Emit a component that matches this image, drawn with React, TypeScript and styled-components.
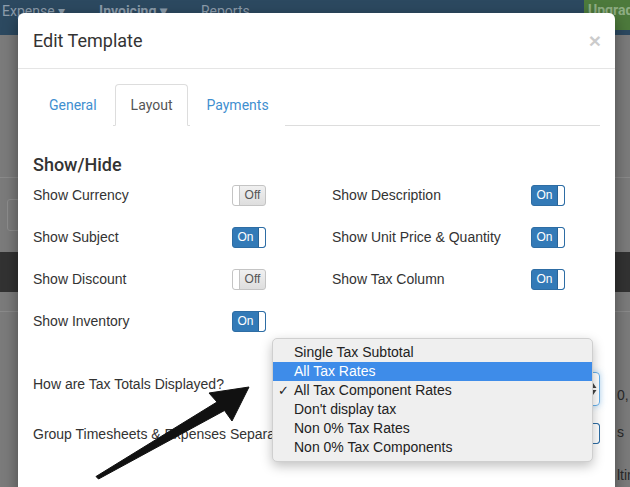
import * as React from "react"
import styled, { createGlobalStyle } from "styled-components"

const GlobalStyle = createGlobalStyle`
    html, body {
        margin: 0;
        padding: 0;
        background: #7b7b7b;
        overflow: hidden;
    }
    * {
        box-sizing: border-box;
    }
`

const Page = styled.div`
    position: relative;
    width: 630px;
    height: 487px;
    overflow: hidden;
    font-family: "Liberation Sans", Arial, sans-serif;
`

// Dimmed application behind the modal
const NavBar = styled.div`
    display: flex;
    height: 35px;
    background: #2c4960;
    font-family: Roboto, sans-serif;
    font-size: 14px;
    color: #8c9cab;
`

const NavItem = styled.div<{ $bold?: boolean }>`
    padding: 2px 32px 0 2px;
    line-height: 18px;
    font-weight: ${p => (p.$bold ? 700 : 400)};
`

const Upgrade = styled.div`
    margin-left: auto;
    width: 46px;
    height: 30px;
    padding: 2px 0 0 4px;
    background: #4d7a3c;
    color: #8fae84;
    font-weight: 700;
    overflow: hidden;
    white-space: nowrap;
`

const BgBody = styled.div`
    display: flex;
    flex-direction: column;
`

const BgRow = styled.div<{ $h: number; $bg?: string; $line?: boolean; $bottom?: boolean }>`
    display: flex;
    align-items: ${p => (p.$bottom ? "flex-end" : "center")};
    height: ${p => p.$h}px;
    background: ${p => p.$bg || "#7b7b7b"};
    border-bottom: ${p => (p.$line ? "1px solid #8a8a8a" : "none")};
    padding-left: 617px;
    font-size: 14px;
    color: #2a2a2a;
    white-space: nowrap;
    overflow: hidden;
`

const BgInput = styled.div`
    position: relative;
    left: -610px;
    width: 60px;
    height: 32px;
    border: 1px solid #8d8d8d;
    border-radius: 3px;
`

// Modal
const Modal = styled.div`
    position: absolute;
    left: 18px;
    top: 13px;
    width: 597px;
    height: 500px;
    background: #fff;
    border-radius: 6px;
    box-shadow: 0 5px 15px rgba(0, 0, 0, 0.4);
    overflow: hidden;
`

const ModalHeader = styled.div`
    display: flex;
    align-items: center;
    padding: 15px;
    border-bottom: 1px solid #e5e5e5;
`

const Title = styled.h4`
    margin: 0;
    flex: 1;
    font-family: Roboto, sans-serif;
    font-size: 18px;
    font-weight: 400;
    line-height: 25px;
    color: #333;
`

const Close = styled.span`
    font-family: "Liberation Sans", sans-serif;
    font-size: 21px;
    font-weight: 700;
    line-height: 1;
    color: #000;
    opacity: 0.2;
    margin-right: -1px;
`

const ModalBody = styled.div`
    padding: 15px;
`

const Tabs = styled.ul`
    display: flex;
    margin: 0;
    padding: 0;
    list-style: none;
    border-bottom: 1px solid #ddd;
    font-family: Roboto, sans-serif;
    font-size: 14px;
`

const Tab = styled.li<{ $active?: boolean }>`
    margin: 0 2px -1px 0;
    padding: 10px 15px;
    line-height: 20px;
    border: 1px solid ${p => (p.$active ? "#ddd" : "transparent")};
    border-bottom-color: ${p => (p.$active ? "#fff" : "transparent")};
    border-radius: 4px 4px 0 0;
    background: #fff;
    color: ${p => (p.$active ? "#555" : "#3f8fd0")};
`

const Heading = styled.h3`
    margin: 30px 0 0;
    font-family: Roboto, sans-serif;
    font-size: 18px;
    font-weight: 500;
    line-height: 18px;
    color: #333;
`

const Grid = styled.div`
    display: grid;
    grid-template-columns: 299px 1fr;
    grid-auto-rows: 42px;
`

const Cell = styled.div`
    display: flex;
    align-items: center;
`

const Label = styled.span<{ $w?: number }>`
    width: ${p => (p.$w ? `${p.$w}px` : "auto")};
    font-size: 14px;
    color: #333;
`

const ToggleBox = styled.div<{ $on: boolean }>`
    display: flex;
    flex-direction: ${p => (p.$on ? "row" : "row-reverse")};
    width: 34px;
    height: 21px;
    border: 1px solid ${p => (p.$on ? "#2e6da4" : "#c4c4c4")};
    border-radius: 3px;
    background: ${p => (p.$on ? "#337ab7" : "linear-gradient(#f0f0f0, #dedede)")};
    overflow: hidden;
`

const ToggleText = styled.span<{ $on: boolean }>`
    flex: 1;
    text-align: center;
    font-size: 12px;
    line-height: 19px;
    color: ${p => (p.$on ? "#fff" : "#555")};
`

const Knob = styled.span<{ $on: boolean }>`
    width: 7px;
    background: #fff;
    border-radius: ${p => (p.$on ? "0 2px 2px 0" : "2px 0 0 2px")};
    border-left: ${p => (p.$on ? "1px solid #2a6496" : "none")};
    border-right: ${p => (p.$on ? "none" : "1px solid #c4c4c4")};
`

const Toggle: React.FC<{ on: boolean }> = ({ on }) => (
    <ToggleBox $on={on}>
        <ToggleText $on={on}>{on ? "On" : "Off"}</ToggleText>
        <Knob $on={on} />
    </ToggleBox>
)

const FormRow = styled.div<{ $mt: number; $h: number }>`
    display: flex;
    align-items: center;
    margin-top: ${p => p.$mt}px;
    height: ${p => p.$h}px;
`

const RowLabel = styled.span<{ $shift?: number }>`
    margin-top: ${p => p.$shift || 0}px;
    font-size: 14px;
    color: #333;
    white-space: nowrap;
`

const Select = styled.div`
    display: flex;
    align-items: center;
    justify-content: flex-end;
    margin-left: auto;
    width: 268px;
    height: 34px;
    padding-right: 2px;
    border: 1px solid #66afe9;
    border-radius: 4px;
    box-shadow: 0 0 6px rgba(102, 175, 233, 0.5);
`

const PushRight = styled.div`
    margin-left: auto;
`

// Native select popup
const Menu = styled.ul`
    position: absolute;
    left: 272px;
    top: 338px;
    width: 321px;
    margin: 0;
    padding: 4px 0;
    list-style: none;
    background: #efefef;
    border: 1px solid #cfcfcf;
    border-radius: 5px;
    box-shadow: 0 4px 12px rgba(0, 0, 0, 0.25);
    font-size: 14px;
`

const MenuItem = styled.li<{ $hl?: boolean }>`
    position: relative;
    height: 19px;
    line-height: 19px;
    padding-left: 21px;
    background: ${p => (p.$hl ? "#3e8ce9" : "transparent")};
    color: ${p => (p.$hl ? "#fff" : "#222")};
`

const Check = styled.span`
    position: absolute;
    left: 5px;
    font-size: 13px;
`

const ArrowLayer = styled.svg`
    position: absolute;
    left: 0;
    top: 0;
    pointer-events: none;
`

const options = [
    "Single Tax Subtotal",
    "All Tax Rates",
    "All Tax Component Rates",
    "Don't display tax",
    "Non 0% Tax Rates",
    "Non 0% Tax Components",
]

const App: React.FC = () => (
    <Page>
        <GlobalStyle />
        <NavBar>
            <NavItem>Expense ▾</NavItem>
            <NavItem $bold>Invoicing ▾</NavItem>
            <NavItem>Reports</NavItem>
            <Upgrade>Upgrade</Upgrade>
        </NavBar>
        <BgBody>
            <BgRow $h={143} $line />
            <BgRow $h={74}>
                <BgInput />
            </BgRow>
            <BgRow $h={40} $bg="#323232" />
            <BgRow $h={20} $line />
            <BgRow $h={91} $bottom>0,</BgRow>
            <BgRow $h={37} $bottom>s</BgRow>
            <BgRow $h={43} $bottom>ltin</BgRow>
        </BgBody>

        <Modal>
            <ModalHeader>
                <Title>Edit Template</Title>
                <Close>×</Close>
            </ModalHeader>
            <ModalBody>
                <Tabs>
                    <Tab>General</Tab>
                    <Tab $active>Layout</Tab>
                    <Tab>Payments</Tab>
                </Tabs>
                <Heading>Show/Hide</Heading>
                <Grid>
                    <Cell><Label $w={199}>Show Currency</Label><Toggle on={false} /></Cell>
                    <Cell><Label $w={199}>Show Description</Label><Toggle on /></Cell>
                    <Cell><Label $w={199}>Show Subject</Label><Toggle on /></Cell>
                    <Cell><Label $w={199}>Show Unit Price &amp; Quantity</Label><Toggle on /></Cell>
                    <Cell><Label $w={199}>Show Discount</Label><Toggle on={false} /></Cell>
                    <Cell><Label $w={199}>Show Tax Column</Label><Toggle on /></Cell>
                    <Cell><Label $w={199}>Show Inventory</Label><Toggle on /></Cell>
                </Grid>
                <FormRow $mt={30} $h={34}>
                    <RowLabel $shift={-10}>How are Tax Totals Displayed?</RowLabel>
                    <Select>
                        <svg width="8" height="14" viewBox="0 0 8 14">
                            <path d="M4 1 L7.5 6 H0.5 Z M4 13 L7.5 8 H0.5 Z" fill="#444" />
                        </svg>
                    </Select>
                </FormRow>
                <FormRow $mt={17} $h={21}>
                    <RowLabel>Group Timesheets &amp; Expenses Separately</RowLabel>
                    <PushRight>
                        <Toggle on />
                    </PushRight>
                </FormRow>
            </ModalBody>
        </Modal>

        <Menu>
            {options.map((o, i) => (
                <MenuItem key={o} $hl={i === 1}>
                    {i === 2 && <Check>✓</Check>}
                    {o}
                </MenuItem>
            ))}
        </Menu>

        <ArrowLayer width="630" height="487" viewBox="0 0 630 487">
            <path
                d="M96 476.5 L217 402 L209 393 L249 387 L232 421 L224.5 410.5 L98.5 479 Z"
                fill="#111"
                stroke="#111"
                strokeWidth="1"
                strokeLinejoin="round"
            />
        </ArrowLayer>
    </Page>
)

export default App
